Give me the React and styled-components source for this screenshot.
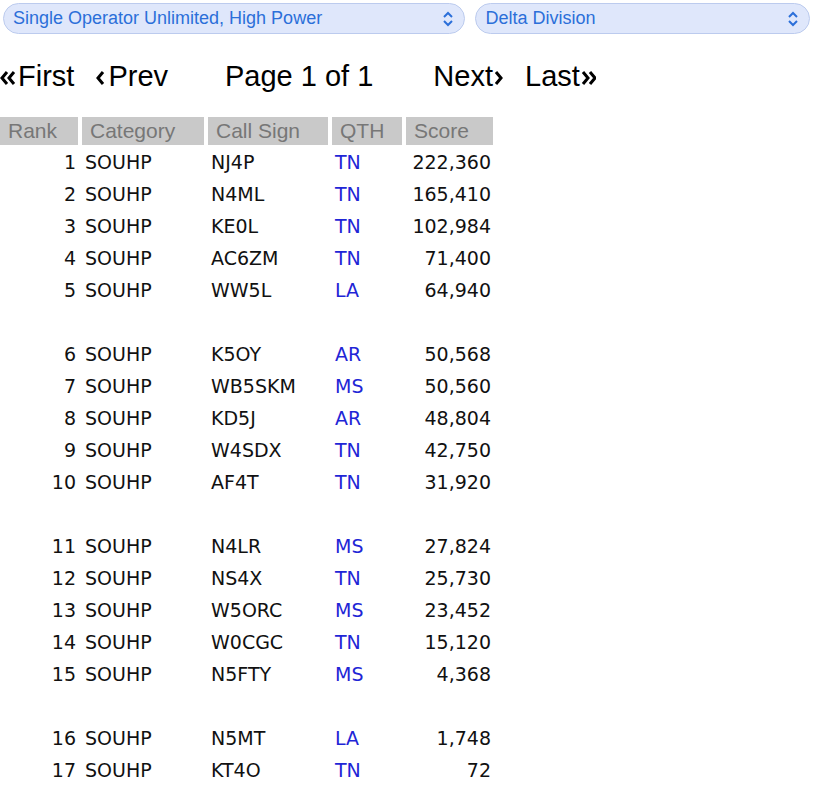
import React from "react";
import styled, { createGlobalStyle } from "styled-components";

const G = createGlobalStyle`
  body { margin: 0; background: #fff; font-family: "DejaVu Sans", Verdana, sans-serif; }
`;
const Bar = styled.div`display:flex;gap:10px;padding:3px 3px 0 3px;`;
const Select = styled.div`
  flex:${p=>p.$w};display:flex;align-items:center;justify-content:space-between;
  height:31px;box-sizing:border-box;padding:0 10px 0 9px;border-radius:16px;
  background:#dfe7fb;border:1px solid #bccbee;color:#2b6fd9;font-size:18px;
  font-family:"Liberation Sans",Arial,sans-serif;
`;
const Nav = styled.div`
  display:flex;align-items:center;height:30px;margin-top:27px;font-size:29px;color:#000;
  font-family:"Liberation Sans",Arial,sans-serif;
`;
const NavItem = styled.span`margin-left:${p=>p.$ml}px;white-space:nowrap;`;
const Table = styled.table`border-spacing:4px 2.3px;margin:24px 0 0 -4px;font-size:19px;`;
const Th = styled.th`
  background:#c9c9c9;color:#777;font-weight:normal;height:28px;padding:0 8px;text-align:left;
  font-family:"Liberation Sans",Arial,sans-serif;font-size:21px;
  width:${p=>p.$w}px;
`;
const Td = styled.td`
  height:30px;padding:0 ${p=>p.$r?2:3}px 0 3px;text-align:${p=>p.$r?"right":"left"};
  color:${p=>p.$blue?"#1f26d6":"#111"};
`;
const data=[
["NJ4P","TN","222,360"],["N4ML","TN","165,410"],["KE0L","TN","102,984"],["AC6ZM","TN","71,400"],["WW5L","LA","64,940"],
["K5OY","AR","50,568"],["WB5SKM","MS","50,560"],["KD5J","AR","48,804"],["W4SDX","TN","42,750"],["AF4T","TN","31,920"],
["N4LR","MS","27,824"],["NS4X","TN","25,730"],["W5ORC","MS","23,452"],["W0CGC","TN","15,120"],["N5FTY","MS","4,368"],
["N5MT","LA","1,748"],["KT4O","TN","72"]];
const L = "M7 3 L2 9 L7 15"; const R="M3 3 L8 9 L3 15";
const Ic=({d,w=10})=><svg width={w} height="18" viewBox={`0 0 ${w} 18`} style={{verticalAlign:"-1px",marginRight:2}}><path d={d} fill="none" stroke="#000" strokeWidth="3"/></svg>;
const Updown=()=><svg width="12" height="16" viewBox="0 0 12 16"><path d="M2 6 L6 2 L10 6 M2 10 L6 14 L10 10" fill="none" stroke="#2b6fd9" strokeWidth="2"/></svg>;
export default function App(){
  const rows=[];
  data.forEach((r,i)=>{
    if(i>0&&i%5===0) rows.push(<tr key={"b"+i}><Td colSpan={5}/></tr>);
    rows.push(<tr key={i}><Td $r>{i+1}</Td><Td>SOUHP</Td><Td>{r[0]}</Td><Td $blue>{r[1]}</Td><Td $r>{r[2]}</Td></tr>);
  });
  return <><G/>
    <Bar>
      <Select $w={466}><span>Single Operator Unlimited, High Power</span><Updown/></Select>
      <Select $w={331}><span>Delta Division</span><Updown/></Select>
    </Bar>
    <Nav>
      <NavItem $ml={0}><Ic d="M7 3 L2 9 L7 15 M14 3 L9 9 L14 15" w={16}/>First</NavItem>
      <NavItem $ml={22}><Ic d={L}/>Prev</NavItem>
      <NavItem $ml={57}>Page 1 of 1</NavItem>
      <NavItem $ml={60}>Next<Ic d={R}/></NavItem>
      <NavItem $ml={20}>Last<Ic d="M3 3 L8 9 L3 15 M10 3 L15 9 L10 15" w={16}/></NavItem>
    </Nav>
    <Table>
      <thead><tr><Th $w={62}>Rank</Th><Th $w={106}>Category</Th><Th $w={104}>Call Sign</Th><Th $w={54}>QTH</Th><Th $w={71}>Score</Th></tr></thead>
      <tbody>{rows}</tbody>
    </Table>
  </>;
}
